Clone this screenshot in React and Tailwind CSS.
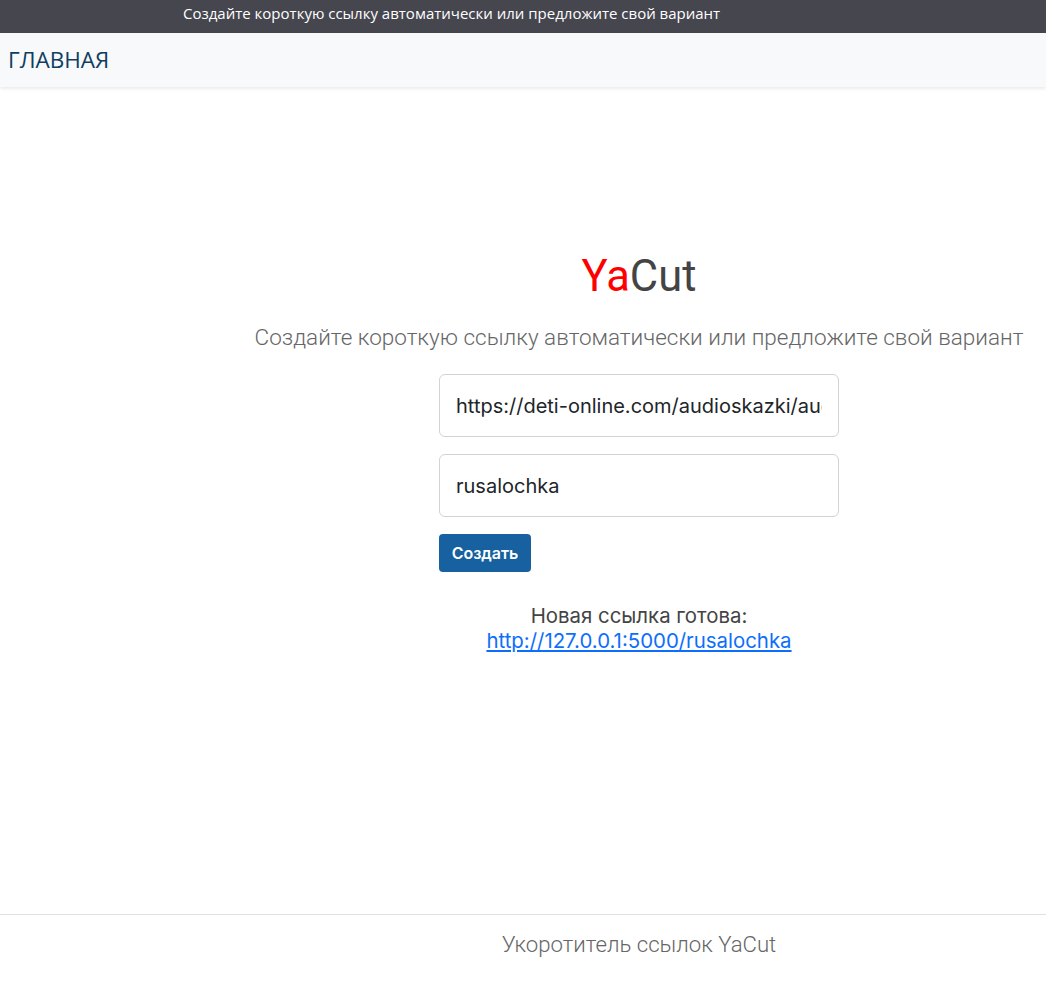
import React from 'react';

const App = () => {
    return (
        <div className="min-h-[985px] flex flex-col bg-white" style={{ fontFamily: 'Inter, sans-serif' }}>
            {/* top strip */}
            <div className="h-[33px] bg-[#46464f] flex items-center pl-[183px] pb-[6px] text-white text-[15px] font-['Open_Sans',sans-serif]">
                Создайте короткую ссылку автоматически или предложите свой вариант
            </div>

            {/* nav */}
            <nav className="h-[54px] bg-[#f8f9fa] shadow-[0_2px_3px_rgba(0,0,0,0.08)] flex items-center px-2">
                <a href="#" className="text-[22.5px] text-[#0f3e63] font-['Open_Sans',sans-serif]">ГЛАВНАЯ</a>
            </nav>

            {/* main */}
            <main className="flex-1 pl-[232px] pt-[168px] flex flex-col items-center">
                <h1 className="text-[43.5px] leading-none font-['Roboto',sans-serif] text-[#444]">
                    <span className="text-[#ff0000]">Ya</span>Cut
                </h1>
                <p className="mt-[22px] text-[22.5px] font-light font-['Roboto',sans-serif] text-[#666]">
                    Создайте короткую ссылку автоматически или предложите свой вариант
                </p>
                <form className="mt-[20px] w-[400px] flex flex-col">
                    <input
                        defaultValue="https://deti-online.com/audioskazki/audioskazki-andersena/rusalochka"
                        className="h-[63px] w-full px-4 text-[20px] text-[#212529] border border-[#ced4da] rounded-md outline-none"
                    />
                    <input
                        defaultValue="rusalochka"
                        className="mt-[17px] h-[63px] w-full px-4 text-[20px] text-[#212529] border border-[#ced4da] rounded-md outline-none"
                    />
                    <div className="mt-[17px]">
                        <button type="button" className="h-[38px] w-[92px] bg-[#1761a0] text-white text-[16px] font-semibold rounded">
                            Создать
                        </button>
                    </div>
                </form>
                <div className="mt-[32px] text-center text-[20.4px] leading-[1.2] text-[#444]">
                    <p>Новая ссылка готова:</p>
                    <a href="#" className="text-[#0d6efd] underline">http://127.0.0.1:5000/rusalochka</a>
                </div>
            </main>

            {/* footer */}
            <footer className="border-t border-[#dee2e6] h-[71px] pl-[232px] pt-[13px] flex justify-center">
                <span className="text-[22.2px] font-light font-['Roboto',sans-serif] text-[#666]">Укоротитель ссылок YaCut</span>
            </footer>
        </div>
    );
};

export default App;
